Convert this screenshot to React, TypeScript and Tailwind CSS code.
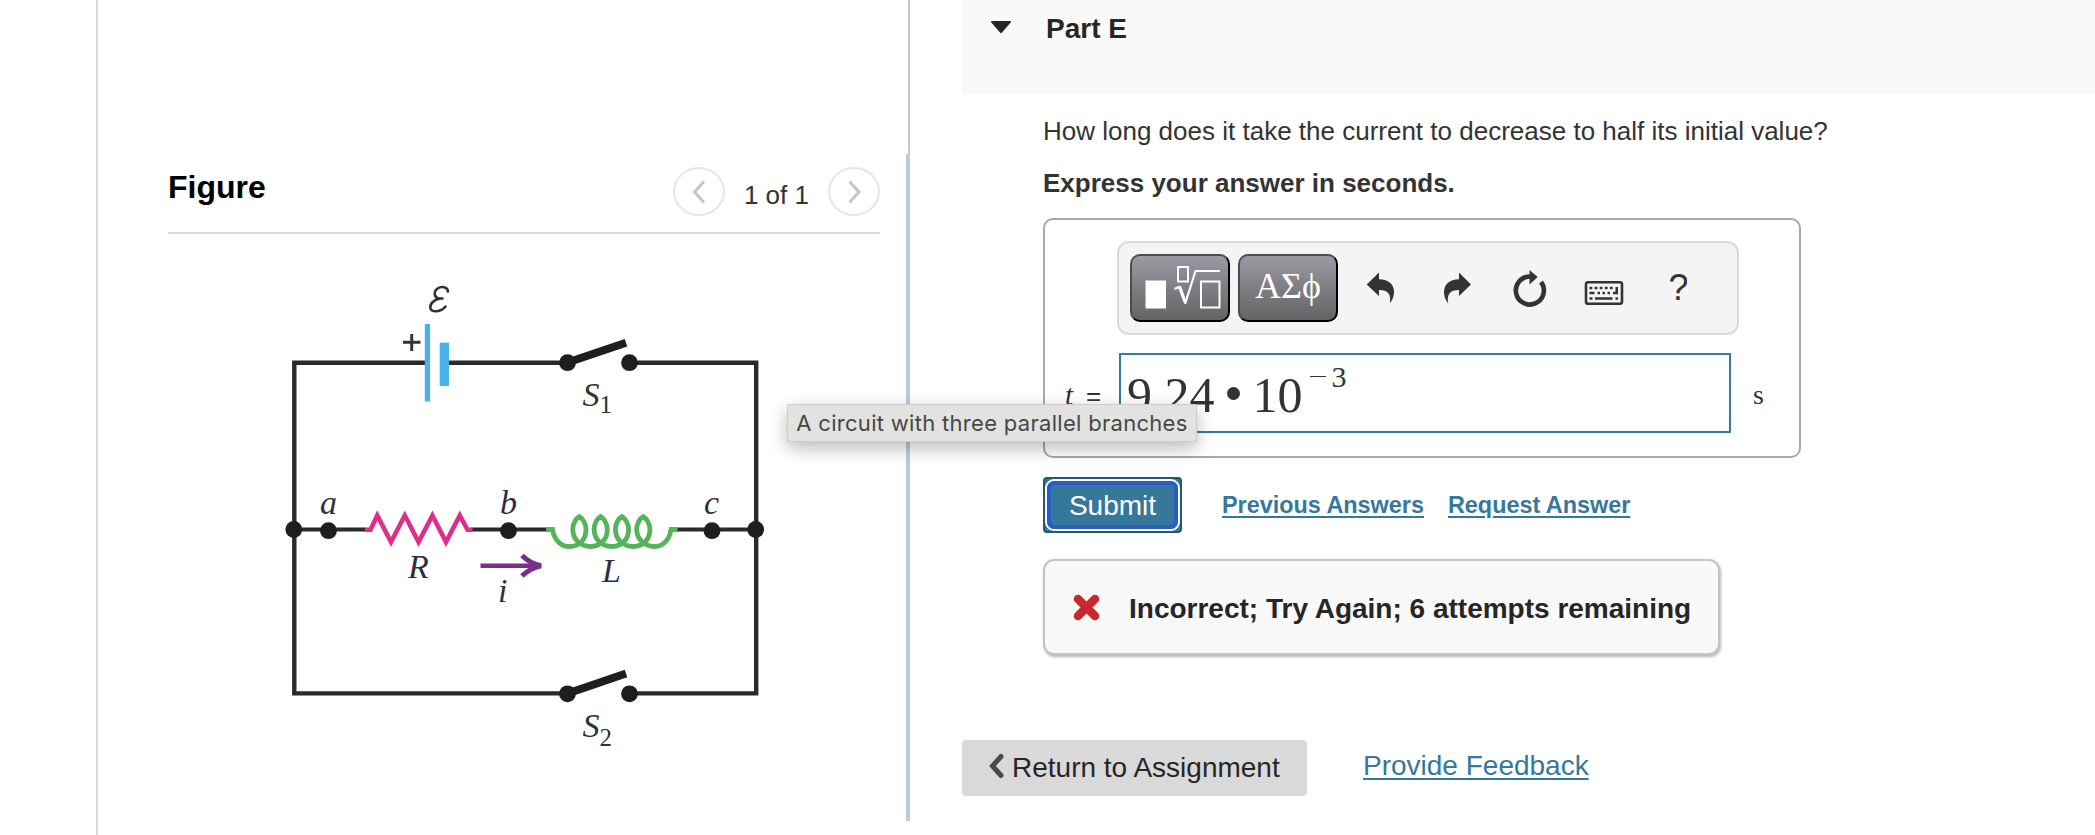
import React from "react";

const SANS = "font-['Liberation_Sans',Arial,sans-serif]";
const SERIF = "font-['Liberation_Serif','Times_New_Roman',serif]";

function Circuit() {
  return (
    <svg viewBox="168 234 712 587" className="block h-[587px] w-[712px]" fill="none">
      <g stroke="#2b292b" strokeWidth="4.4">
        <path d="M427 362.7H294.3V693.4H567" />
        <path d="M448 362.7H567" />
        <path d="M630 362.7H756.2V693.4H630" />
        <path d="M294 529.5H366M471 529.5H547M676 529.5H756" strokeWidth="4" />
      </g>
      <g fill="#49b1ec">
        <rect x="424.8" y="324" width="5.2" height="77.5" />
        <rect x="439.7" y="342.7" width="9.3" height="43.3" />
      </g>
      <path d="M403 342.3H420.500M411.700 334V351" stroke="#3a3236" strokeWidth="3" />
      <g stroke="#1f1d1f" strokeWidth="8">
        <path d="M569 362L626 342.800" />
        <path d="M569 693L626 673.500" />
      </g>
      <g fill="#1f1d1f">
        <circle cx="567.5" cy="362.7" r="8.400" />
        <circle cx="629.5" cy="362.7" r="8.400" />
        <circle cx="567.5" cy="693.8" r="8.400" />
        <circle cx="629.5" cy="693.8" r="8.400" />
        <circle cx="293.800" cy="529.500" r="8.400" />
        <circle cx="328.500" cy="530.700" r="8.400" />
        <circle cx="508.500" cy="530.700" r="8.400" />
        <circle cx="712" cy="530.700" r="8.400" />
        <circle cx="755.700" cy="529.500" r="8.400" />
      </g>
      <path
        d="M365 529.800H370.500L377.300 515.500L391 542L404.800 515.500L418.600 542L432.400 515.500L446 542L459.800 515.500L467.500 529.800H472.500"
        stroke="#dd2e8a"
        strokeWidth="4.600"
      />
      <path
        d="M546 529.500H552.500C554 540 561 546.500 569.500 546.500C581 546.500 586 538 586 529.500C586 523 582 518 579.300 516.500C576.500 518 572.800 523 572.800 529.500C572.800 538 579 546.500 590.700 546.500C602 546.500 607.300 538 607.300 529.500C607.300 523 603.300 518 600.600 516.500C597.800 518 594.100 523 594.100 529.500C594.100 538 600.300 546.500 612 546.500C623.300 546.500 628.600 538 628.600 529.500C628.600 523 624.600 518 621.900 516.500C619.100 518 615.400 523 615.400 529.500C615.400 538 621.600 546.500 633.300 546.500C644.600 546.500 649.900 538 649.900 529.500C649.900 523 645.900 518 643.200 516.500C640.400 518 636.700 523 636.700 529.500C636.700 538 643 546.500 654.600 546.500C663 546.500 669.500 540 671 529.500H677.500"
        stroke="#53b558"
        strokeWidth="4.800"
      />
      <g stroke="#7b2d90" strokeWidth="4.400">
        <path d="M480.500 565.700H539" />
        <path d="M522 555.500C526 559.500 533 564 541 565.700C533 567.500 526 572 522 576" strokeWidth="5" />
      </g>
      <g fill="#2f2f3d" className={`${SERIF} italic`} fontSize="34">
        <text x="320" y="514">a</text>
        <text x="500" y="514" >b</text>
        <text x="704" y="514">c</text>
        <text x="408" y="578">R</text>
        <text x="498" y="602">i</text>
        <text x="602" y="582">L</text>
        <text x="582.500" y="405.500">S</text>
        <text x="582.500" y="736.500">S</text>
        <g className="not-italic" fontSize="25">
          <text x="599.500" y="412.500">1</text>
          <text x="599.500" y="746">2</text>
        </g>
      </g>
      <path
        d="M448 291.500C447.500 286.500 441.500 286 437.500 288.500C433.500 291.500 434 297 438.500 298.500H442.500M440.500 298.500C434.500 299 430 303.500 430.300 307.500C430.800 312.800 441 312.500 445.500 306.500"
        stroke="#2f2f3d"
        strokeWidth="2.600"
        strokeLinecap="round"
      />
    </svg>
  );
}

function NavButton({ d }: { d: string }) {
  return (
    <button className="flex h-[49px] w-[52px] items-center justify-center rounded-[50%] border-2 border-[#e6e6e6]">
      <svg viewBox="0 0 16 24" className="h-6 w-4" fill="none" stroke="#c6c6c6" strokeWidth="3">
        <path d={d} />
      </svg>
    </button>
  );
}

function FigurePane() {
  return (
    <section className="h-full w-[810px] shrink-0 border-l-2 border-[#d9d9d9] pl-[70px]">
      <div className="flex h-[234px] w-[712px] items-end justify-between border-b-2 border-[#dcdcdc]">
        <h2 className="mb-[27px] text-[32px] leading-[36px] font-bold text-black">Figure</h2>
        <div className="mb-4 flex items-center">
          <NavButton d="M13 1.500L3.500 12L13 22.500" />
          <span className="mx-[19px] pt-[6px] text-[26px] leading-[30px] text-[#333]">1 of 1</span>
          <NavButton d="M3.500 1.500L13 12L3.500 22.500" />
        </div>
      </div>
      <Circuit />
    </section>
  );
}

const TOOL_BTN =
  "h-[68px] w-[100px] rounded-[10px] border-2 border-t-[#4d4d4f] border-l-[#4d4d4f] border-r-black border-b-black bg-linear-to-b from-[#9b99a4] to-[#646464]";

function Toolbar() {
  return (
    <div className="ml-[72px] flex h-[94px] w-[622px] items-center rounded-xl border-2 border-[#dadada] bg-[#f4f4f4] pl-[11px]">
      <button className={TOOL_BTN}>
        <svg viewBox="1132 256 96 64" className="block h-16 w-24" fill="none" stroke="#fff">
          <rect x="1145.500" y="280.500" width="20.500" height="28" fill="#fff" stroke="none" />
          <rect x="1178" y="267" width="10" height="14.500" strokeWidth="2" />
          <path d="M1174.500 289L1180 286.500" strokeWidth="2" />
          <path d="M1179.500 286.500L1185 302" strokeWidth="3.200" />
          <path d="M1185 304L1195.500 271H1220" strokeWidth="2.200" />
          <rect x="1201" y="281.500" width="18.500" height="26" strokeWidth="2" />
        </svg>
      </button>
      <button className={`${TOOL_BTN} ${SERIF} ml-2 pb-1 text-[36px] leading-[40px] text-white`}>ΑΣϕ</button>
      <svg viewBox="1338 254 349 68" className="block h-[68px] w-[349px]" fill="#333">
        <path d="M1366.700 284.500L1379 272.500V279.300C1389 279.300 1394 285 1394 292C1394 296.500 1392 301 1389.800 303C1391.500 294.500 1388 290 1379 290V296Z" />
        <path d="M1471 284.500L1459 272.500V279.300C1449 279.300 1444 285 1444 292C1444 296.500 1446 301 1448.200 303C1446.500 294.500 1450 290 1459 290V296Z" />
        <path d="M1530 276.500A14 14 0 1 0 1541 282" fill="none" stroke="#333" strokeWidth="4.600" />
        <path d="M1529.500 270L1537.700 277L1529.500 284.500Z" />
        <rect x="1586" y="282.300" width="36" height="21.500" rx="2" fill="none" stroke="#333" strokeWidth="2.600" />
        <path
          d="M1589.500 288H1614.500"
          fill="none"
          stroke="#333"
          strokeWidth="2.600"
          strokeDasharray="2.800 2.300"
        />
        <path
          d="M1589.500 293H1594.500M1597.500 293H1600M1602.500 293H1605M1607.500 293H1610M1613 293H1618M1589.500 298.500H1592.500M1595 298.500H1612.500M1615.500 298.500H1618"
          fill="none"
          stroke="#333"
          strokeWidth="2.600"
        />
        <path d="M1615.500 287H1618V293H1615.500Z" />
        <text x="1668.500" y="300" fontSize="36" className={SANS}>?</text>
      </svg>
    </div>
  );
}

function AnswerRow() {
  return (
    <div className={`mt-[18px] flex h-20 items-center ${SERIF} text-[#333]`}>
      <div className="flex w-[74px] items-baseline pt-1 pl-5">
        <span className="w-[21px] text-[29px] leading-[32px] italic">t</span>
        <span className={`${SANS} text-[26px] leading-[32px]`}>=</span>
      </div>
      <div className="flex h-20 w-[612px] items-center border-2 border-[#367a9c] pl-[6px] text-[50px] leading-[76px]">
        <span className="pt-1">9.24</span>
        <span className="ml-[12px] h-[13px] w-[13px] rounded-full bg-[#333]" />
        <span className="ml-[13px] pt-1">10</span>
        <span className="mb-[33px] ml-[7px] h-[1.500px] w-4 bg-[#333]" />
        <span className="mb-[32px] ml-[6px] text-[30px] leading-[30px]">3</span>
      </div>
      <span className="ml-[22px] pt-1 text-[28px] leading-[32px]">s</span>
    </div>
  );
}

function PartPane() {
  return (
    <section className="flex h-full grow flex-col pl-[52px]">
      <header className="flex h-[94px] shrink-0 items-start bg-[#f9f9f9] pl-7">
        <svg viewBox="0 0 22 14" className="mt-5 h-[14px] w-[22px]" fill="#262626">
          <path d="M1.500 1H20.500Q21.500 1.500 20.700 2.500L12 12.500Q11 13.500 10 12.500L1.300 2.500Q0.500 1.500 1.500 1Z" />
        </svg>
        <h2 className="mt-3 ml-[34px] text-[28px] leading-[33px] font-bold text-[#262626]">Part E</h2>
      </header>
      <div className="pl-[81px]">
        <p className="mt-[21px] text-[26px] leading-[32px] text-[#333]">
          How long does it take the current to decrease to half its initial value?
        </p>
        <p className="mt-5 text-[26px] leading-[32px] font-bold text-[#333]">Express your answer in seconds.</p>
        <div className="mt-[19px] h-[240px] w-[758px] rounded-[10px] border-2 border-[#a9a9a9] pt-[21px]">
          <Toolbar />
          <AnswerRow />
        </div>
        <div className="mt-[19px] flex h-14 items-center">
          <button className="h-14 w-[139px] rounded-[4px] border-2 border-[#25596f] bg-[#36789b]">
            <span className="flex h-[52px] w-[135px] rounded-[9px] border-2 border-white">
              <span className="flex h-12 w-[131px] items-center justify-center rounded-[8px] border-4 border-[#2a5bca] pt-px text-[28px] leading-[32px] text-white">
                Submit
              </span>
            </span>
          </button>
          <a className="ml-10 text-[23.400px] leading-[28px] font-bold text-[#36789b] underline decoration-2 underline-offset-[3px]">
            Previous Answers
          </a>
          <a className="ml-6 text-[23.400px] leading-[28px] font-bold text-[#36789b] underline decoration-2 underline-offset-[3px]">
            Request Answer
          </a>
        </div>
        <div className="mt-[26px] flex h-[96px] w-[677px] items-center rounded-[11px] border-2 border-[#c4c4c4] bg-[#f9f9f9] pl-7 shadow-[1px_2px_3px_#b5b5b5]">
          <svg viewBox="0 0 27 27" className="h-[27px] w-[27px]" stroke="#c9292c" strokeWidth="8.500" strokeLinecap="round">
            <path d="M5 5L22 22M22 5L5 22" />
          </svg>
          <span className="ml-[29px] pt-1 text-[28px] leading-[32px] font-bold text-[#262626]">
            Incorrect; Try Again; 6 attempts remaining
          </span>
        </div>
      </div>
      <footer className="mt-[85px] flex h-14 items-center">
        <button className="flex h-14 w-[345px] items-center rounded-[4px] bg-[#d9d9d9] pl-[26px] text-[28px] leading-[32px] text-[#262626]">
          <svg viewBox="0 0 16 26" className="mb-1 h-[26px] w-4" fill="none" stroke="#4a4a4a" strokeWidth="5" strokeLinecap="round">
            <path d="M13 3.500L4.500 13L13 22.500" />
          </svg>
          <span className="ml-2">Return to Assignment</span>
        </button>
        <a className="mb-1 ml-[56px] text-[28px] leading-[32px] text-[#36789b] underline decoration-2 underline-offset-[3px]">
          Provide Feedback
        </a>
      </footer>
    </section>
  );
}

export default function App() {
  return (
    <main className={`relative flex h-[835px] w-full overflow-hidden bg-white pl-24 ${SANS}`}>
      <FigurePane />
      <div className="flex w-1 shrink-0 flex-col items-end">
        <div className="h-[154px] w-[2px] bg-[#bccadb]" />
        <div className="h-[667px] w-1 bg-[#bccadb]" />
      </div>
      <PartPane />
      <div
        role="tooltip"
        className="absolute top-[404px] left-[787px] flex h-[38px] w-[410px] items-center justify-center rounded-[2px] border border-[#cdcdcc] bg-[#e2e2e0] font-[Inter,sans-serif] text-[22px] leading-[28px] tracking-[0.300px] whitespace-nowrap text-[#474747] shadow-[0_6px_18px_rgba(0,0,0,0.28)]"
      >
        A circuit with three parallel branches
      </div>
    </main>
  );
}
